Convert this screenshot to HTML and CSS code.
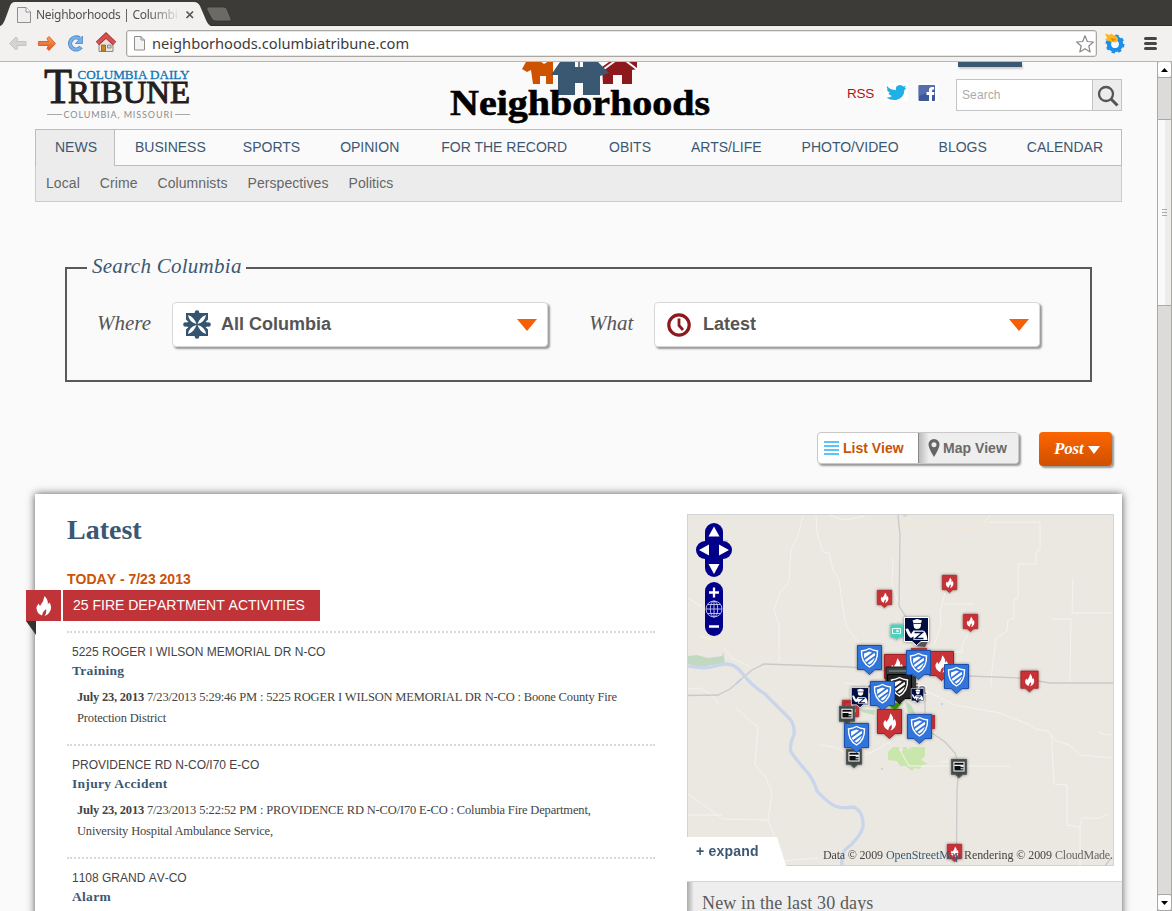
FILE: index.html
```html
<!DOCTYPE html>
<html lang="en">
<head>
<meta charset="utf-8">
<title>Neighborhoods | Columbia Daily Tribune</title>
<link rel="stylesheet" href="styles.css">
</head>
<body>
<div class="tabstrip">
  <svg class="tabshape" width="240" height="26" viewBox="0 0 240 26">
    <path d="M0 26 C3 25 4 22 6 17 L10 6 Q11.500 2 15 2 L194 2 Q198 2 200 6 L206 20 Q208 25 211 26 Z" fill="#f2f1f0"/>
    <path d="M209 7 H223 Q226 7 227 9 L231 19 Q232 21 229 21 H216 Q213 21 212 19 L207 10 Q206 7 209 7Z" fill="#6c6a65" stroke="#2f2e2a" stroke-width=".7"/>
    <path d="M17.500 7.500 H26 L30.500 12 V22.500 H17.500Z" fill="#eee" stroke="#8e8e8e"/><path d="M26 7.500 V12 H30.500" fill="#fff" stroke="#8e8e8e"/>
    <path d="M186.500 11.500 L193 18 M193 11.500 L186.500 18" stroke="#555" stroke-width="1.700"/>
  </svg>
  <span class="tabtitle">Neighborhoods | Columbi</span>
</div>
<div class="toolbar">
  <svg class="navicons" width="118" height="35" viewBox="0 26 118 35">
    <defs><linearGradient id="og" x1="0" y1="0" x2="0" y2="1"><stop offset="0" stop-color="#f8a25c"/><stop offset="1" stop-color="#e0541b"/></linearGradient></defs>
    <path d="M9.500 43.500 L16 37 L18 39 L16.500 41.500 H26 V45.500 H16.500 L18 48 L16 50Z" fill="#d6d4d1" stroke="#c6c4c1" stroke-linejoin="round"/>
    <path d="M55.500 43.500 L49 36.500 L47 38.500 L48.500 41.500 H38.500 V45.500 H48.500 L47 48.500 L49 50.500Z" fill="url(#og)" stroke="#d8622a" stroke-linejoin="round"/>
    <path d="M81 47 A6 6 0 1 1 79.500 38.500" fill="none" stroke="#4c86c6" stroke-width="4.200"/>
    <path d="M81 47 A6 6 0 1 1 79.500 38.500" fill="none" stroke="#79b0e6" stroke-width="2.600"/>
    <path d="M82.500 36 V43.500 H75.500Z" fill="#79b0e6" stroke="#4c86c6" stroke-width=".8"/>
    <path d="M99 42 V51.500 H113 V42 L106 36.500Z" fill="#e9e5dc" stroke="#8d877c"/>
    <path d="M97.500 43.500 L106 35.500 L114.500 43.500" fill="none" stroke="#a62f2f" stroke-width="5"/>
    <path d="M97.500 43.300 L106 35.500 L114.500 43.300" fill="none" stroke="#d65050" stroke-width="3.400"/>
    <path d="M101.500 45 H105.500 V51 H101.500Z" fill="#c98720" stroke="#8d5f12" stroke-width=".8"/><path d="M107.500 45 H111 V48 H107.500Z" fill="#c7d6e4" stroke="#777" stroke-width=".8"/>
  </svg>
  <div class="omnibox">
    <svg width="14" height="17" viewBox="0 0 14 17"><path d="M1.500 1.500 H8 L11.500 5 V15 H1.500Z" fill="#f4f4f4" stroke="#8e8e8e"/><path d="M8 1.500 V5 H11.500" fill="none" stroke="#8e8e8e"/></svg>
    <span class="url">neighborhoods.columbiatribune.com</span>
    <svg class="star" width="20" height="20" viewBox="0 0 20 20"><path d="M10 1.800 L12.300 7.500 L18.400 8 L13.800 12 L15.200 17.900 L10 14.700 L4.800 17.900 L6.200 12 L1.600 8 L7.700 7.500Z" fill="#fff" stroke="#888" stroke-width="1.200" stroke-linejoin="round"/></svg>
  </div>
  <svg class="exticons" width="75" height="35" viewBox="1097 26 75 35">
    <circle cx="1115" cy="44" r="6" fill="none" stroke="#1e8fe8" stroke-width="4.500"/>
    <circle cx="1115" cy="44" r="8.500" fill="none" stroke="#1e8fe8" stroke-width="2" stroke-dasharray="3.340"/>
    <circle cx="1115" cy="44.500" r="3.600" fill="#f6fafd"/>
    <path d="M1105 33.500 L1110 35 L1111 33.500 L1114 35.500 Q1120 37 1117 42 Q1112 43 1109 41 L1105 39.500 L1107 38Z" fill="#ffb81c"/><path d="M1110 38 L1116 39 L1113 41.500Z" fill="#e98a00"/>
    <path d="M1145.500 38.500 H1155.500 M1145.500 43.500 H1155.500 M1145.500 48.500 H1155.500" stroke="#464646" stroke-width="3" stroke-linecap="round"/>
  </svg>
</div>
<div class="browser">
<main class="page">
  <header class="masthead">
    <svg class="tribune" width="150" height="67" viewBox="42 62 150 67" font-family="'Liberation Serif', serif">
      <text x="44" y="103" font-size="50" textLength="28" lengthAdjust="spacingAndGlyphs" fill="#231f20" stroke="#231f20" stroke-width=".8">T</text>
      <text x="68" y="103" font-size="31" textLength="122" lengthAdjust="spacingAndGlyphs" fill="#231f20" stroke="#231f20" stroke-width="1">RIBUNE</text>
      <text x="77.500" y="79" font-size="13.500" textLength="112" lengthAdjust="spacingAndGlyphs" fill="#1173b5" stroke="#1173b5" stroke-width=".3">COLUMBIA DAILY</text>
      <path d="M47 114.500 H62 M175 114.500 H190" stroke="#a8a8a8"/>
      <text x="63.500" y="117.500" font-family="Lato, sans-serif" font-size="9" textLength="109" fill="#8c8c8c">COLUMBIA, MISSOURI</text>
    </svg>
    <svg class="hoods" width="270" height="67" viewBox="445 62 270 67">
      <path d="M526 62 H553 V84 H546 V76 H540 V84 H533 L531 70 L527 72 L522 69Z" fill="#cf5200"/><path d="M540 61 H549 L544 64Z" fill="#fafafa"/>
      <path d="M602 67 L609 62 H637 V69 L632 70 V84 H622 V75 H613 V84 H603Z" fill="#8e191d"/><path d="M604 69 L615 61 M626 61 L638 70" stroke="#fafafa" stroke-width="2"/>
      <path d="M560 62 H598 L609 73 L600 76 V95 H558 V75 H551Z" fill="#3b5872"/><path d="M575 83 H583 V95 H575Z" fill="#fafafa"/>
      <path d="M575 62 H583 V67 H575Z" fill="#fafafa"/><path d="M579 62 V68" stroke="#3b5872" stroke-width="1.500"/>
      <text x="450" y="114.500" font-family="'Liberation Serif', serif" font-weight="bold" font-size="35" textLength="260" lengthAdjust="spacingAndGlyphs" stroke="#000" stroke-width=".6">Neighborhoods</text>
    </svg>
    <div class="tools">
      <div class="bluetab"></div>
      <div class="toolrow">
        <span class="rss">RSS</span>
        <svg class="social" width="56" height="20" viewBox="884 83 56 20">
          <path fill="#fff" d="M884 83h24v18h-24zM918 83h20v19h-20z"/>
          <path d="M887 86 Q890 90 896 90 Q895 85.500 900 85 Q902 85 903.500 86.500 L906 85.500 L904.500 88 L906.500 87.800 L904.500 90 Q904 98 896 100 Q890 100.500 886.500 97.500 Q890 97.500 892 96 Q889 95.500 888.500 93 H890 Q887 91.500 886.800 89 L888 89.400 Q886 88 887 86Z" fill="#1fb1e6"/>
          <rect x="918.500" y="85" width="16.500" height="16" rx="1" fill="#3d579b"/><path d="M918.500 85h16.500v5l-16.500 6z" fill="#6f86bb" opacity=".5"/>
          <path d="M929 101 V95 H926.500 V92 H929 V90 Q929 87 932 87 H934 V89.500 H933 Q932 89.500 932 91 V92 H934.500 L934 95 H932 V101Z" fill="#fff"/>
        </svg>
        <div class="searchbox"><span>Search</span><i><svg width="24" height="24" viewBox="0 0 24 24"><circle cx="9" cy="9" r="7" fill="none" stroke="#555" stroke-width="2.300"/><path d="M14 14 L20.500 20.500" stroke="#555" stroke-width="3"/></svg></i></div>
      </div>
    </div>
  </header>
  <nav class="mainnav">
    <a class="on">NEWS</a><a class="w-b">BUSINESS</a><a>SPORTS</a><a>OPINION</a><a class="rec">FOR THE RECORD</a><a>OBITS</a><a>ARTS/LIFE</a><a>PHOTO/VIDEO</a><a>BLOGS</a><a>CALENDAR</a>
  </nav>
  <nav class="subnav"><a>Local</a><a>Crime</a><a>Columnists</a><a>Perspectives</a><a>Politics</a></nav>

  <section class="finder">
    <h3>Search Columbia</h3>
    <div class="fields">
      <label>Where</label>
      <div class="drop d1">
        <svg width="28" height="29" viewBox="0 0 28 29"><g fill="#34546f"><path d="M3 3h22v23H3z"/><circle cx="14" cy="2.500" r="2.300"/><circle cx="14" cy="26.500" r="2.300"/><circle cx="2.500" cy="14.500" r="2.300"/><circle cx="25.500" cy="14.500" r="2.300"/></g><g fill="#fff"><path d="M13.500 14 Q6 12 5 5 Q11 7 13.500 14Z"/><path d="M14.500 14 Q22 12 23 5 Q17 7 14.500 14Z"/><path d="M13.500 15 Q6 17 5 24 Q11 22 13.500 15Z"/><path d="M14.500 15 Q22 17 23 24 Q17 22 14.500 15Z"/><path d="M3 9.500l2.500 2.500L3 12.500zM3 19.500l2.500-2.500L3 16.500zM25 9.500l-2.500 2.500l2.500.5zM25 19.500l-2.500-2.500l2.500-.5z"/></g></svg>
        <b>All Columbia</b><i class="arrow"></i>
      </div>
      <label class="l2">What</label>
      <div class="drop d2">
        <svg width="24" height="24" viewBox="0 0 24 24"><circle cx="12" cy="12" r="10.200" fill="none" stroke="#8e191d" stroke-width="3.200"/><path d="M12 5.500 V12.500 L16 17" fill="none" stroke="#8e191d" stroke-width="2.800"/></svg>
        <b>Latest</b><i class="arrow"></i>
      </div>
    </div>
  </section>

  <div class="actions">
    <div class="views">
      <span class="list"><svg width="15" height="14" viewBox="0 0 15 14"><path d="M0 1h15M0 5h15M0 9h15M0 13h15" stroke="#5cc4f7" stroke-width="2"/></svg>List View</span>
      <span class="map"><svg width="12" height="18" viewBox="0 0 12 18"><path fill-rule="evenodd" d="M6 0 A5.500 5.500 0 0 1 11.500 6 Q11 10 6 18 Q1 10 .5 6 A5.500 5.500 0 0 1 6 0Z M6 3.200 a2.500 2.500 0 1 0 .01 0z" fill="#666"/></svg>Map View</span>
    </div>
    <span class="post">Post<i></i></span>
  </div>

  <div class="panel">
    <section class="feed">
      <h2>Latest</h2>
      <h4>TODAY - 7/23 2013</h4>
      <div class="ribbon">
        <span class="flag"><svg width="17" height="22" viewBox="0 0 17 22"><use href="#flame" x="0" y="0" width="17" height="22"/></svg></span>
        <span class="bar">25 FIRE DEPARTMENT ACTIVITIES</span>
      </div>
      <article><div class="addr">5225 ROGER I WILSON MEMORIAL DR N-CO</div><h5>Training</h5><p><b>July 23, 2013</b> 7/23/2013 5:29:46 PM : 5225 ROGER I WILSON MEMORIAL DR N-CO : Boone County Fire<br>Protection District</p></article>
      <article><div class="addr">PROVIDENCE RD N-CO/I70 E-CO</div><h5>Injury Accident</h5><p><b>July 23, 2013</b> 7/23/2013 5:22:52 PM : PROVIDENCE RD N-CO/I70 E-CO : Columbia Fire Department,<br>University Hospital Ambulance Service,</p></article>
      <article><div class="addr">1108 GRAND AV-CO</div><h5>Alarm</h5></article>
    </section>
    <aside class="side">
      <svg class="mapview" width="427" height="352" viewBox="687 514 427 352">
        <defs>
          <symbol id="flame" viewBox="0 0 17 22" overflow="visible"><path d="M9.500 1 Q14 6 12.500 9.500 L14.500 7.500 Q18 13 14 18 Q12.500 20 9.500 21 Q12 17.500 11 14 Q8 16 7 20.500 Q1 18 1.500 12 L3.500 8.500 L5 11 Q9 6 9.500 1Z" fill="#fff"/></symbol>
          <symbol id="fire" viewBox="0 0 25 30" overflow="visible"><path d="M.5.500H24.500V24.500H18L12.500 29.500L7 24.500H.5Z" fill="#c63134" stroke="#9d2023"/><use href="#flame" x="5" y="3.500" width="15" height="19"/></symbol>
          <symbol id="shieldart" viewBox="0 0 25 30" overflow="visible"><path d="M12.500 3.500 Q16 5.500 20.500 6 Q21 17 12.500 22 Q4 17 4.500 6 Q9 5.500 12.500 3.500Z" fill="none" stroke="#fff" stroke-width="1.400"/><path d="M7 8.500 L12.500 6.500 L15 7.500 L7.200 13.200Z M18 8.300 V10.500 L9 17 L7.700 15 L17 8.200Z M17.800 12.700 Q17 16.500 12.500 19.500 L10.500 18.300Z" fill="#fff"/></symbol>
          <symbol id="blue" viewBox="0 0 25 30" overflow="visible"><path d="M.5.500H24.500V24.500H18L12.500 29.500L7 24.500H.5Z" fill="#3274da" stroke="#1c4fab"/><use href="#shieldart" width="25" height="30"/></symbol>
          <symbol id="black" viewBox="0 0 25 30" overflow="visible"><path d="M.5.500H24.500V24.500H18L12.500 29.500L7 24.500H.5Z" fill="#222" stroke="#000"/><use href="#shieldart" width="25" height="30"/></symbol>
          <symbol id="police" viewBox="0 0 25 30" overflow="visible"><path d="M.5.500H24.500V24.500H17L12.500 28.500L8 24.500H.5Z" fill="#03103f" stroke="#fff"/><path d="M8.500 3.500 L13 2 L18 3.500 L17 6 V7.500 Q17 12 13 12 Q9.500 12 9.500 7.500 V6Z" fill="#fff"/><path d="M9.500 6.500h7.500" stroke="#03103f" stroke-width=".8"/><path d="M1.500 12 L4 11.500 L7 17 L9.500 13.500 H19 Q22.500 14 23.500 23 H9.500 V19.500 L7 21 Q3.500 19 1.500 12Z" fill="#fff"/><path d="M10.500 15.500 H18.500 L11.500 21.500 H19.500" fill="none" stroke="#03103f" stroke-width="1.400"/></symbol>
          <symbol id="news" viewBox="0 0 25 30" overflow="visible"><path d="M1 1H24V24H18L12.500 29L7 24H1Z" fill="#3e4545" stroke="#4e5656" stroke-width="2"/><path d="M4.500 5h16v14h-16z" fill="#111" stroke="#fff" stroke-width="1.600"/><path d="M5 10h15" stroke="#fff" stroke-width="2"/><path d="M15 12h5M15 15.500h5" stroke="#fff" stroke-width="1.500"/></symbol>
          <filter id="sh" x="-30%" y="-30%" width="160%" height="160%"><feDropShadow dx="0" dy="0" stdDeviation="1.400" flood-color="#000" flood-opacity=".5"/></filter>
        </defs>
        <rect x="687.500" y="514.500" width="426" height="351" fill="#ebe8e1" stroke="#d2d4d4"/>
        <path d="M688 656 L697 655 L708 658 L722 656 L723 652 L725 662 L719 664 L700 667 L688 664Z" fill="#c3d8c1"/>
        <path d="M722 540h6v3h-6z" fill="#c3d8c1"/>
        <path d="M888 752 L893 747 H899 V751 H903 V747 H907 V750 L912 747 H925 V756 L921 760 L928 764 L922 765 L920 769 L914 768 L912 771 L906 766 L900 766 L897 761 L888 760Z" fill="#c9e6ac"/>
        <path d="M905 701 L911 705 L916 715 L908 712ZM860 709 L875 710 L874 715 L862 712ZM903 515h5l-4 2z" fill="#c3dbbd"/>
        <g fill="none" stroke="#f5f3ee" stroke-width="1">
          <path d="M803 515 L798 535 L791 550 L789 582 L780 593 L774 610 L777 620 L779 623 V662M816 515 L817 533 L823 552 L829 553 L833 570 L839 580 L843 609 L846 626 L860 644"/>
          <path d="M830 515 L842 520 L850 519 L865 516M688 598 L702 607 M712 640 L700 636M724 648 L732 658 L741 662 L750 667M688 689 L700 688 L712 695 L719 705M735 707 L748 719 L758 727 L755 765 L765 776 L772 792 L768 820 L778 845 L782 866M688 794 L723 819 L768 820M688 815 H722M780 861 L818 858"/>
          <path d="M893 558 L892 585 L898 602 M893 620 L902 630M945 593 L940 612 L941 625 L934 645M943 604 H974M970 630 L962 645 V652 H948M990 515 L979 529 M989 522 H1040 V550 L1036 552 V564 H1018 V598 L1014 600 V618 L1008 620 L1007 631 L996 638 L992 670 L991 687M1073 579 L1072 613 H1112M1051 619 H1071 L1070 682"/>
          <path d="M926 691 L955 705 L1000 713 L1030 725 L1035 729 L1048 731 L1055 740 L1069 745 L1080 755 L1112 758M1052 736 V748 L1054 784 L1067 785 L1067 825 L1080 827 L1082 818 H1100 L1108 814 M1080 827 V866M820 745 L835 747 L845 753M865 755 L880 748 L890 742M900 750 L909 766 H1010M940 762 L965 760M1098 731 L1101 734 L1112 735M845 683 L860 685"/>
        </g>
        <path d="M688 648 L702 641 L720 643 L742 653 L762 649 H797 L814 655 L828 667M898 526 L979 529 L990 517M702 641 L712 634 L720 641" fill="none" stroke="#f2e7d8" stroke-width="1.200"/>
        <path d="M688 695.500 L718 695 L730 689 L752 670 L764 664 L850 667 L888 671M898 515 L900 535 L899 606 L906 617M968 676 L1020 678 L1050 683 H1113M925 690 V725M932 733 L945 742 L955 753 L958 762M958 777 L957 790 L956.500 845M1105 866 L1112 857" fill="none" stroke="#c9c9c9" stroke-width="1.300"/>
        <path d="M688 666 Q705 670 720 665 Q733 661 742 673 Q752 686 765 694 Q778 707 788 717 Q795 723 794 735 Q789 745 791 752 Q798 762 808 773 Q814 781 817 791 Q827 802 835 806 Q842 809 854 807 Q864 812 863 827 Q860 838 845 850 Q841 855 842 866" fill="none" stroke="#c9d5ea" stroke-width="3.300"/>
        <path d="M736 684l5-5M941 704h2M881 769h2" stroke="#b9cbec" stroke-width="1.500"/>
        <text x="867" y="694" font-family="'Liberation Sans', sans-serif" font-size="14" font-weight="bold" fill="#777" stroke="#fff" stroke-width="2" paint-order="stroke" textLength="59">Columbia</text>
        <g filter="url(#sh)">
          <use href="#fire" x="877" y="590" width="15" height="18"/><use href="#fire" x="942" y="575" width="15" height="18"/><use href="#fire" x="963" y="614" width="15" height="18"/>
          <use href="#fire" x="1020.500" y="670.500" width="18" height="22"/><use href="#fire" x="947" y="844" width="15" height="18"/>
          <path d="M890.500 624.500H903V637.500H899L896.500 640L894 637.500H890.500Z" fill="#4fd0bd"/><path d="M892.500 628.500h8v5h-8z" fill="none" stroke="#e9fffb"/><circle cx="897.500" cy="631" r="1.300" fill="#e9fffb"/>
          <path d="M916 646 L921 640 L928 641 L925 647Z" fill="#555"/>
          <path d="M911 648h16v10h-16z" fill="#b03234"/><use href="#fire" x="842" y="700" width="15" height="18"/><use href="#fire" x="844" y="702" width="15" height="18"/>
          <path d="M886 703H902L895 710.500Z" fill="#3c8b05"/>
          <use href="#fire" x="884" y="654" width="25" height="30"/><use href="#fire" x="929" y="651" width="25" height="30"/>
          <path d="M886 667h26v30h-26z" fill="#3b4141" stroke="#191919"/><path d="M889 671h20" stroke="#667070" stroke-width="2"/>
          <path d="M910 676h6v20h-6z" fill="#303535"/>
          <use href="#black" x="887" y="674" width="25" height="30"/>
          <use href="#police" x="904" y="617" width="25" height="30"/>
          <use href="#blue" x="857" y="645" width="25" height="30"/><use href="#blue" x="906" y="650" width="25" height="30"/><use href="#blue" x="944" y="664" width="25" height="30"/>
          <use href="#police" x="851" y="687" width="18" height="22"/><use href="#police" x="911" y="688" width="13" height="16"/>
          <use href="#blue" x="870" y="681" width="25" height="30"/>
          <path d="M925 715h10v14h-10z" fill="#b03234"/>
          <use href="#fire" x="877" y="709" width="25" height="30"/><use href="#blue" x="907" y="714" width="25" height="30"/>
          <use href="#news" x="839" y="706" width="16" height="19"/><use href="#news" x="846" y="749" width="16" height="19"/><use href="#news" x="951" y="759" width="16" height="19"/>
          <use href="#blue" x="844" y="723" width="25" height="30"/>
        </g>
        <g fill="#00008b"><rect x="705" y="523" width="18" height="54" rx="9"/><rect x="696" y="541" width="36" height="18" rx="9"/><rect x="705" y="582" width="18" height="54" rx="9"/></g>
        <path d="M714 526.500l5.500 10h-11zM714 574l5.500-10h-11zM699 550l10-5.500v11zM729 550l-10-5.500v11z" fill="#fff"/>
        <path d="M709 592.500h10M714 587.500v10M709 626.500h10" stroke="#fff" stroke-width="2.300"/>
        <g fill="none" stroke="#c5c9f0" stroke-width=".9"><circle cx="714" cy="609" r="8"/><ellipse cx="714" cy="609" rx="3.700" ry="8"/><path d="M714 601v16M706 609h16M708 604.500h12M708 613.500h12"/></g>
        <path d="M686 837H777L786.500 867H686Z" fill="#fff"/>
        <text x="696" y="856" font-family="'Liberation Sans', sans-serif" font-size="14" font-weight="bold" fill="#3b5872" textLength="62.500">+ expand</text>
        <text y="859" font-family="'Liberation Serif', serif" font-size="12" fill="#444"><tspan x="823" textLength="60">Data © 2009</tspan><tspan x="886" fill="#3b5872" textLength="75">OpenStreetMap</tspan><tspan x="964" textLength="88">Rendering © 2009</tspan><tspan x="1055" fill="#666" textLength="58">CloudMade.</tspan></text>
      </svg>
      <div class="newbox">New in the last 30 days</div>
    </aside>
  </div>
</main>
<div class="scroll">
  <span class="sb"><svg width="7" height="4" viewBox="0 0 7 4"><path d="M3.500 0L7 4H0z"/></svg></span><div class="trackA"></div><div class="thumb"><svg width="7" height="8" viewBox="0 0 7 8"><path d="M1 .5h5M1 3.500h5M1 6.500h5" stroke="#aaa"/></svg></div><div class="trackB"></div><span class="sb"><svg width="7" height="4" viewBox="0 0 7 4"><path d="M0 0H7L3.500 4z"/></svg></span>
</div>
</div>
</body>
</html>
```
FILE: styles.css
```css
* { box-sizing: border-box; }
body { margin: 0; width: 1172px; height: 911px; overflow: hidden; display: flex; flex-direction: column; font-family: "Liberation Sans", Arial, sans-serif; background: #fafafa; }
svg { display: block; flex: none; }
.tabstrip { position: relative; height: 26px; flex: none; background: #3c3b37; border-bottom: 1px solid #2f2e2a; }
.tabshape { position: absolute; left: 0; top: 0; }
.tabtitle { position: absolute; left: 36px; top: 7px; width: 141px; white-space: nowrap; font: 12px/16px "Noto Sans", sans-serif; letter-spacing: -.3px; color: transparent; background: linear-gradient(90deg, #4c4c4c 80%, #4c4c4c20 100%); background-clip: text; -webkit-background-clip: text; }
.toolbar { height: 36px; flex: none; display: flex; background: #f2f1f0; border-bottom: 1px solid #b9b6b2; }
.omnibox { margin: 4px 0 0 8px; width: 971px; height: 27px; border: 1px solid #aaa7a3; border-radius: 3px; background: #fff; display: flex; align-items: center; padding-left: 6px; box-shadow: inset 0 0 0 1px #e8e7e6; }
.url { flex: 1; margin: -2px 0 0 5px; font: 14.650px/20px "Noto Sans", sans-serif; color: #3c3c3c; }
.star { margin-right: 1px; }
.browser { flex: 1; min-height: 0; display: flex; }
.page { width: 1157px; padding-left: 35px; overflow: hidden; background: #fafafa; }
.masthead { width: 1087px; height: 67px; display: flex; padding-left: 7px; }
.hoods { margin-left: 253px; }
.tools { width: 275px; margin-left: 132px; }
.bluetab { width: 64px; height: 5px; margin-left: 111px; background: #3b5872; box-shadow: 1px 2px 2px #ccc; }
.toolrow { display: flex; margin-top: 12px; height: 32px; }
.rss { width: 37px; font-size: 13.500px; line-height: 29px; letter-spacing: -.2px; color: #b01116; }
.social { margin-top: 4px; }
.searchbox { margin-left: 16px; width: 166px; height: 32px; display: flex; border: 1px solid #c4c4c4; background: #fff; font-size: 12px; line-height: 30px; color: #aaa; }
.searchbox span { flex: 1; padding-left: 5px; letter-spacing: .1px; }
.searchbox i { width: 29px; border-left: 1px solid #c4c4c4; background: #ececec; padding: 5px 0 0 4px; }
.mainnav { width: 1087px; height: 37px; display: flex; border: 1px solid #bdbdbd; font-size: 14px; line-height: 35px; color: #3b5872; white-space: nowrap; }
.mainnav a { flex: none; margin-right: 40px; }
.mainnav .on { width: 79px; margin-right: 20px; padding-left: 19px; height: 36px; background: #ececec; border-right: 1px solid #bdbdbd; }
.mainnav .w-b { margin-right: 37px; }
.mainnav .rec { margin: 0 42px 0 2px; }
.mainnav a:last-child { margin-right: 0; }
.subnav { width: 1087px; height: 36px; padding-left: 10px; display: flex; gap: 20px; background: #ececec; border: 1px solid #cbcbcb; border-top: 0; font-size: 14px; line-height: 34px; letter-spacing: .07px; color: #666; }
.finder { margin: 65px 0 0 30px; width: 1027px; height: 115px; border: 2px solid #5a5859; }
.finder h3 { margin: -16px 0 0 20px; width: 159px; padding-left: 5px; background: #fafafa; font: italic 21px/26px "Liberation Serif", serif; letter-spacing: .27px; white-space: nowrap; color: #3b5872; }
.fields { display: flex; align-items: center; margin-top: 23px; padding-left: 30px; }
.fields label { width: 75px; margin-top: -3px; font: italic 21px/26px "Liberation Serif", serif; color: #555; }
.fields .l2 { width: 65px; margin-left: 41px; }
.drop { height: 45px; display: flex; align-items: center; background: #fff; border: 1px solid #d8d8d8; border-radius: 4px; box-shadow: 2px 2px 2px #999; padding: 0 10px; font-size: 18px; color: #555; }
.d1 { width: 376px; }
.d2 { width: 386px; padding-left: 12px; }
.drop b { margin: -1px 0 0 10px; flex: 1; }
.d2 b { margin-left: 12px; }
.arrow { border: 10px solid transparent; border-top: 12px solid #f55f06; border-bottom: 0; }
.actions { width: 1077px; margin-top: 50px; display: flex; justify-content: flex-end; }
.views { width: 202px; height: 32px; display: flex; font-weight: bold; font-size: 14px; line-height: 30px; font-kerning: none; border: 1px solid #c8c8c8; border-radius: 4px; background: #fff; box-shadow: 2px 2px 2px #999; }
.views span { display: flex; align-items: center; }
.list { width: 100px; padding-left: 6px; gap: 4px; color: #cb5207; }
.map { flex: 1; padding-left: 9px; gap: 3px; color: #6a6a6a; background: linear-gradient(90deg, #bbb, #eee 10px); border-left: 1px solid #888; border-radius: 0 3px 3px 0; }
.post { width: 73px; height: 34px; margin-left: 20px; border-radius: 4px; background: linear-gradient(#fd6500, #cf5000); box-shadow: 2px 2px 2px #999; display: flex; align-items: center; padding-left: 15px; color: #fff; font: italic bold 17px/34px "Liberation Serif", serif; letter-spacing: -.2px; }
.post i { margin: 2px 0 0 5px; border: 6.500px solid transparent; border-top: 8px solid #fff; border-bottom: 0; }
.panel { width: 1087px; height: 450px; margin-top: 28px; display: flex; background: #fff; box-shadow: 0 0 8px #555; }
.feed { width: 652px; padding-left: 32px; }
.feed h2 { margin: 0; padding-top: 19px; height: 76px; font: bold 28px/34px "Liberation Serif", serif; color: #3b5872; }
.feed h4 { margin: 0; height: 20px; font-size: 14px; line-height: 19px; font-kerning: none; color: #cb5207; }
.ribbon { display: flex; height: 31px; gap: 2px; margin: 0 0 10px -41px; }
.flag { position: relative; width: 35px; background: #c03439; padding: 5px 0 0 9px; }
.flag::after { content: ""; position: absolute; left: 0; top: 31px; border-top: 14px solid #333; border-left: 10px solid transparent; }
.bar { width: 257px; padding-left: 10px; background: #c03439; color: #fff; font-size: 14px; line-height: 31px; font-kerning: none; white-space: nowrap; }
article { width: 588px; height: 113px; padding: 10px 0 0 5px; border-top: 2px dotted #d8d8d8; white-space: nowrap; }
.addr { height: 19px; font-size: 12px; line-height: 19px; font-kerning: none; color: #444; }
article h5 { margin: 0; font: bold 13.500px/18px "Liberation Serif", serif; letter-spacing: .3px; color: #3b5872; }
article p { margin: 7px 0 0 5px; font: 12.500px/21px "Liberation Serif", serif; color: #444; letter-spacing: -.16px; }
article p b { letter-spacing: -.22px; }
.side { width: 435px; padding-top: 20px; }
.newbox { margin-top: 15px; height: 34px; border-top: 1px solid #d4d4d4; background: linear-gradient(90deg, #aaa, #eee 7px); font: 18px/24px "Liberation Serif", serif; letter-spacing: .13px; color: #5a5a5a; padding: 9px 0 0 15px; }
.scroll { width: 15px; border: 1px solid #aaa8a5; border-top: 0; display: flex; flex-direction: column; background: #dcdbd9; }
.sb { height: 15px; background: #fff; border-radius: 3px; display: grid; place-items: center; }
.trackA { height: 42px; border-top: 1px solid #aaa; }
.thumb { height: 187px; background: linear-gradient(90deg, #fafafa 50%, #ececea 50%); border: solid #aaa; border-width: 1px 0; display: grid; place-items: center; }
.trackB { flex: 1; border-bottom: 1px solid #aaa; }
```
